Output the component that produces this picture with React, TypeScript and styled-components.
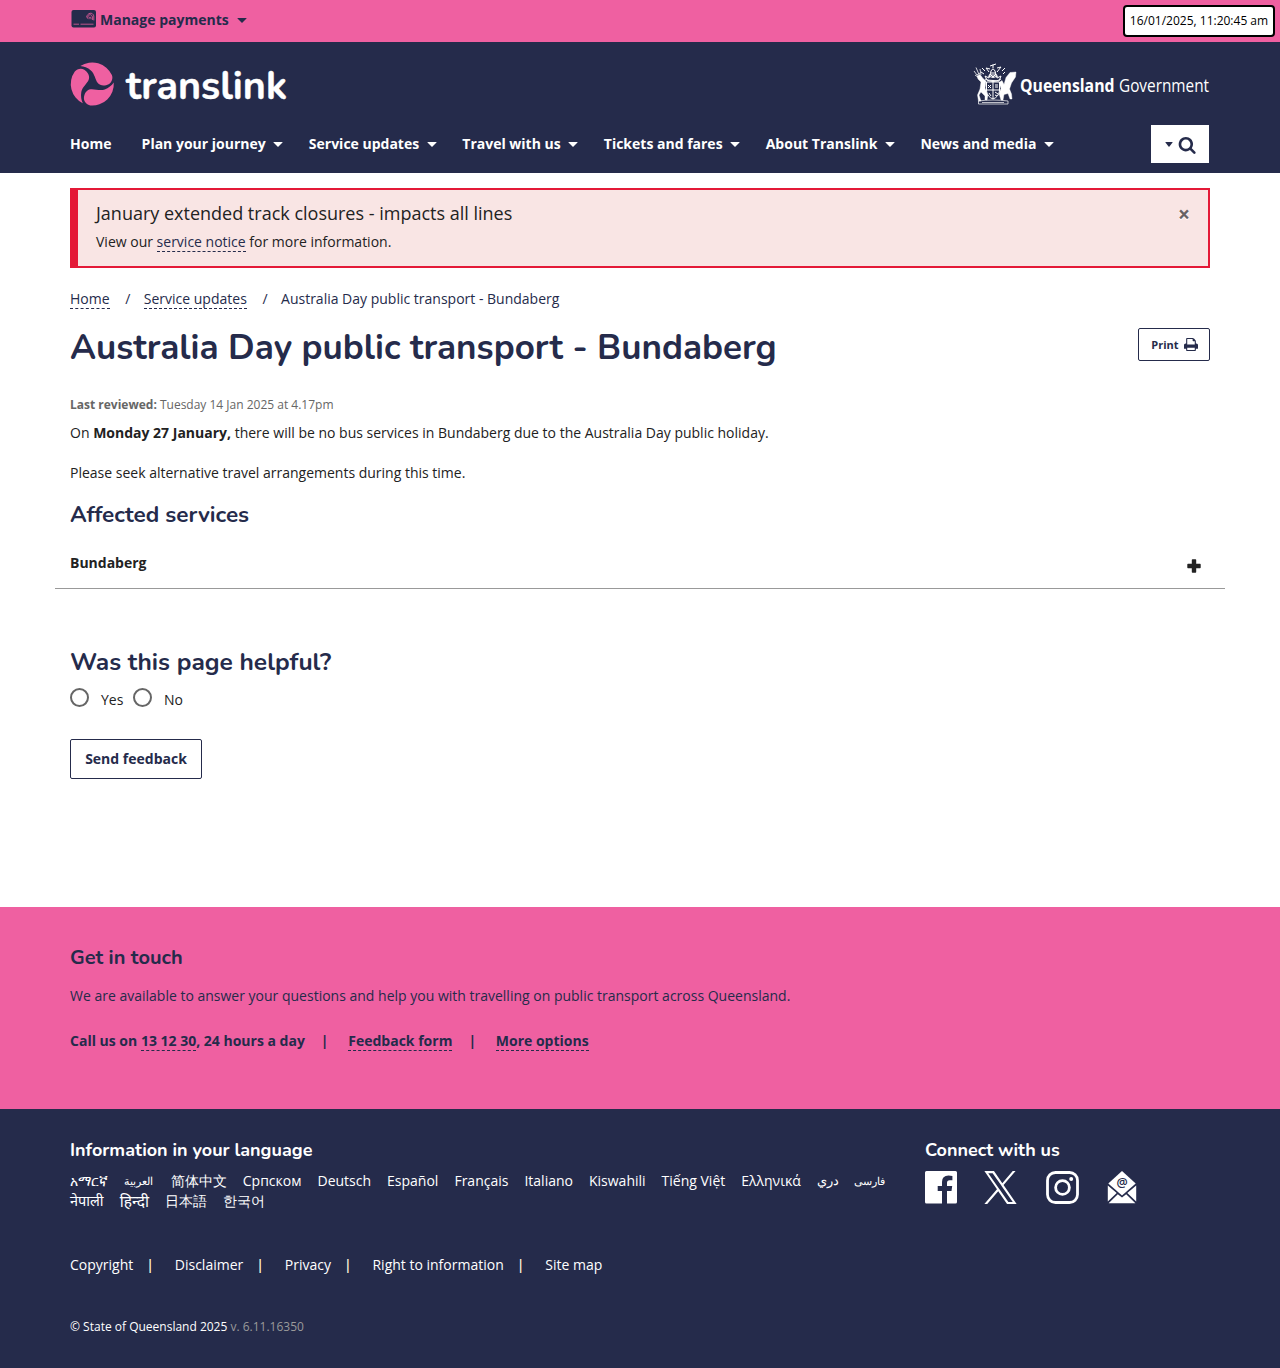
import React from 'react';
import styled, { createGlobalStyle } from 'styled-components';

const navy = '#252b4b';
const pink = '#ef60a1';
const body = '"Open Sans", "Noto Sans", sans-serif';
const heading = 'Nunito, "Open Sans", sans-serif';

const GlobalStyle = createGlobalStyle`
  *, *::before, *::after { box-sizing: border-box; }
  body { margin: 0; background: #fff; color: #222; font: 400 14px/20px ${body}; }
  h1, h2, h3, p, ul { margin: 0; padding: 0; }
  ul { list-style: none; }
  a { color: inherit; text-decoration: none; }
  button { font: inherit; color: inherit; cursor: pointer; }
  svg { display: block; flex: none; overflow: visible; }
`;

const Container = styled.div`
  width: 1140px;
  margin: 0 auto;
`;

const TopBar = styled.div`
  height: 42px;
  background: ${pink};
  color: ${navy};
  display: grid;
  grid-template-columns: 1fr auto;
`;

const PaymentsLink = styled.a`
  display: inline-flex;
  align-items: center;
  height: 40px;
  margin-left: 71px;
  font-weight: 700;
`;

const PaymentsLabel = styled.span`
  margin: 0 8px 0 4px;
`;

const Clock = styled.time`
  height: 32px;
  width: 152px;
  margin: 5px 5px 0 0;
  border: 2px solid #000;
  border-radius: 4px;
  background: #fff;
  color: #000;
  font-size: 12px;
  line-height: 28px;
  text-align: center;
  white-space: nowrap;
`;

const Header = styled.header`
  height: 131px;
  background: ${navy};
  color: #fff;
`;

const BrandRow = styled.div`
  display: flex;
  justify-content: space-between;
  height: 83px;
  padding: 20px 0 0;
`;

const NavRow = styled.nav`
  display: flex;
  justify-content: space-between;
`;

const NavList = styled.ul`
  display: flex;
  gap: 25.5px;
  height: 38px;
`;

const NavItem = styled.li<{ $plain?: boolean }>`
  display: flex;
  align-items: center;
  gap: 7.6px;
  font-weight: 700;
  white-space: nowrap;
  margin-right: ${(p) => (p.$plain ? '4.7px' : '0')};
`;

const Caret = styled.i<{ $small?: boolean }>`
  width: 0;
  height: 0;
  margin-top: 1px;
  border: solid transparent;
  border-width: ${(p) => (p.$small ? '5px 4.5px 0' : '5.5px 5px 0')};
  border-top-color: currentColor;
  border-radius: 1px;
`;

const SearchButton = styled.button`
  display: flex;
  align-items: center;
  gap: 5px;
  width: 58px;
  height: 38px;
  margin-right: 1px;
  padding: 3px 0 0 14px;
  border: 0;
  background: #fff;
  color: ${navy};
`;

const SearchCaret = styled(Caret)`
  margin-top: -3px;
`;

const Alert = styled.section`
  display: flex;
  justify-content: space-between;
  height: 80px;
  margin-top: 15px;
  padding: 10px 18px 0;
  border: 2px solid #e41937;
  border-left-width: 8px;
  background: #f9e5e4;
`;

const AlertTitle = styled.h2`
  font-size: 18px;
  font-weight: 400;
  line-height: 26px;
`;

const AlertText = styled.p`
  margin-top: 6px;
`;

const DashedLink = styled.a`
  color: ${(p) => p.color || 'inherit'};
  border-bottom: 1px dashed currentColor;
`;

const CloseButton = styled.button`
  height: 26px;
  margin-top: 1px;
  padding: 0;
  border: 0;
  background: none;
  color: #686265;
  font-size: 21px;
  font-weight: 700;
  line-height: 26px;
  text-shadow: 0 1px 0 #fff;
`;

const Breadcrumb = styled.nav`
  display: flex;
  margin-top: 21px;
  color: ${navy};
`;

const Slash = styled.span`
  margin: 0 13.4px 0 15.7px;
`;

const TitleRow = styled.div`
  display: flex;
  justify-content: space-between;
  align-items: flex-start;
  height: 86px;
  padding-top: 19px;
`;

const PageTitle = styled.h1`
  color: ${navy};
  font: 700 35px/40px ${heading};
`;

const PrintButton = styled.button`
  display: flex;
  align-items: center;
  justify-content: center;
  gap: 5px;
  width: 72px;
  height: 33px;
  padding: 0 0 0 1px;
  border: 1px solid ${navy};
  border-radius: 2px;
  background: #fff;
  color: ${navy};
  font-size: 11px;
  font-weight: 700;
`;

const Reviewed = styled.p`
  color: #666;
  font-size: 12px;
`;

const Paragraph = styled.p<{ $gap: number }>`
  margin-top: ${(p) => p.$gap}px;
`;

const SectionTitle = styled.h2<{ $size: number; $gap: number }>`
  margin-top: ${(p) => p.$gap}px;
  color: ${navy};
  font: 700 ${(p) => p.$size}px/30px ${heading};
`;

const AccordionRow = styled.div`
  display: flex;
  justify-content: space-between;
  height: 59px;
  margin: 0 -15px;
  padding: 23px 24px 0 15px;
  border-bottom: 1px solid #999;
  font-weight: 700;
`;

const PlusIcon = styled.svg`
  margin-top: 6px;
`;

const RadioRow = styled.div`
  display: flex;
  height: 20px;
  margin-top: 10px;
  gap: 9.5px;
`;

const RadioLabel = styled.label`
  display: flex;
  gap: 12px;
  padding-top: 3px;
`;

const RadioDot = styled.span`
  width: 19px;
  height: 19px;
  margin-top: -2px;
  border: 2px solid #666;
  border-radius: 50%;
`;

const FeedbackButton = styled.button`
  display: block;
  width: 132px;
  height: 40px;
  margin-top: 32px;
  padding: 0;
  border: 1px solid ${navy};
  border-radius: 2px;
  background: #fff;
  color: ${navy};
  font-weight: 700;
`;

const Main = styled.main`
  display: flow-root;
  height: 734px;
`;

const Touch = styled.section`
  height: 202px;
  padding-top: 36px;
  background: ${pink};
  color: ${navy};
`;

const TouchTitle = styled.h2`
  font: 700 20px/30px ${heading};
`;

const TouchLinks = styled.div`
  display: flex;
  margin-top: 25px;
  font-weight: 700;
`;

const TouchBar = styled.span`
  margin: 0 19.7px 0 16px;
`;

const Footer = styled.footer`
  height: 259px;
  padding-top: 26px;
  background: ${navy};
  color: #fff;
`;

const FooterTop = styled.div`
  display: grid;
  grid-template-columns: 855px 1fr;
  height: 120px;
`;

const FooterTitle = styled.h3`
  font: 700 18px/30px ${heading};
`;

const LanguageList = styled.ul`
  display: flex;
  flex-wrap: wrap;
  column-gap: 16px;
  width: 820px;
  margin-top: 6px;
`;

const Language = styled.li<{ $size?: number; $width?: number }>`
  width: ${(p) => (p.$width ? `${p.$width}px` : 'auto')};
  height: 20px;
  font-size: ${(p) => p.$size || 14}px;
  white-space: nowrap;
`;

const SocialList = styled.div`
  display: flex;
  margin-top: 6px;
`;

const SocialLink = styled.a<{ $gap?: number }>`
  margin-right: ${(p) => p.$gap || 0}px;
`;

const LegalList = styled.div`
  display: flex;
`;

const LegalBar = styled.span`
  margin: 0 20.8px 0 13px;
  color: #fff6dc;
  font-weight: 600;
`;

const Copyright = styled.p`
  margin-top: 42px;
  font-size: 12px;
`;

const Version = styled.span`
  color: #9a9a9a;
`;

const CardIcon = () => (
  <svg width="25" height="20" viewBox="0 0 25 20">
    <rect x=".5" width="24.5" height="17.5" rx="2" fill={navy} />
    <path d="M2.500 14.200h5.500M9.500 14.200h13" stroke={pink} strokeWidth="1" opacity=".75" />
    <g fill="none" stroke={pink} strokeWidth=".8">
      <path d="M15.500 7.400c1-5 6.200-5.500 7.300-1.500v4.500" />
      <path d="M16.500 8.500c.5-4.500 4.200-5 4.900-1.500v3" />
      <path d="M18 9.200c.2-3 1.900-3 2 0" />
    </g>
  </svg>
);

const blade =
  'M12 40.8A21.5 21.5 0 0 1 4 9C6 6.300 10.500 5.200 13.500 7.200C17 9.500 19.500 13.500 17.800 17.500C16 21.500 11.500 24.500 10.500 29.500C9.800 33.500 10.500 37.500 12 40.800Z';

const TranslinkLogo = () => (
  <svg width="230" height="55" viewBox="0 0 230 55">
    <g transform="translate(.8 .5)" fill={pink}>
      <path d={blade} />
      <path d={blade} transform="rotate(120 21.5 21.5)" />
      <path d={blade} transform="rotate(240 21.5 21.5)" />
    </g>
    <text x="56" y="36.800" fill="#fff" stroke="#fff" strokeWidth=".4" fontFamily="Nunito" fontWeight="700" fontSize="40.500" textLength="161" lengthAdjust="spacingAndGlyphs">
      translink
    </text>
  </svg>
);

const GovernmentLogo = () => (
  <svg width="237" height="46" viewBox="0 0 237 46">
    <g fill="none" stroke="#fff" strokeWidth="1">
      <path d="M1 9l3 4 3-2M3 5.500l3 7M7 7l1 6M2 13l3 2" strokeWidth=".8" />
      <path fill="#fff" strokeWidth=".4" d="M4 14l3-1.500 3 4 3 2.500-1 7 3 7-1 5h-2l0-4-4-4-2 3 2 6H5.500l-1-6 2.500-6 1-7-3-3z" />
      <path fill="#fff" strokeWidth=".4" d="M43 10l-6 .5-4 5-2 7-2-4-3 2 2 6-2 5 2 6.500h2l1-5.500 4-1 2 5.500h2l-.5-5-2-5 2-6 4-6z" />
      <path d="M13.500 20h13v9q-1 6-6.500 8-5.500-2-6.500-8z" fill={navy} />
      <path d="M20 20v17M13.500 28h13M15 23l3 3m-3 0l3-3M22 23h3m-3 2h3M16 31l2 3m4-4l3 2m-3 1l2 1" />
      <path d="M14 18l-2-4 4 2 1-4 3 3 3-3 1 4 4-2-2 5zM16 10l-3-4 4 1M24 10l4-5-4 1M18 9q2-4 4 0l1 4h-6zM20 6V2.500M17 4l6-2M12 9l-3-3M29 9l3-3M11 12l-3-2M30 12l2-2" />
      <path d="M12 17q8 5 16 0M15 14q5 3 10 0M18 11h5" />
      <path d="M5.500 39q7-1 14.500-1t15 1v3h-29.500zM9 40.500h22" strokeWidth=".7" />
    </g>
    <text x="47" y="29.500" fill="#fff" fontFamily="Open Sans" fontWeight="700" fontSize="18" textLength="94.500" lengthAdjust="spacingAndGlyphs">
      Queensland
    </text>
    <text x="146" y="29.500" fill="#fff" fontFamily="Open Sans" fontWeight="400" fontSize="17.500" textLength="90" lengthAdjust="spacingAndGlyphs">
      Government
    </text>
  </svg>
);

const SearchIcon = () => (
  <svg width="17" height="17" viewBox="0 128 1664 1664" fill="currentColor">
    <path d="M1216 832q0-185-131.5-316.5t-316.5-131.5-316.5 131.5-131.5 316.5 131.5 316.5 316.5 131.5 316.5-131.5 131.5-316.5zM1728 1664q0 52-38 90t-90 38q-54 0-90-38l-343-342q-179 124-399 124-143 0-273.5-55.5t-225-150-150-225-55.5-273.5 55.5-273.5 150-225 225-150 273.5-55.5 273.5 55.5 225 150 150 225 55.5 273.5q0 220-124 399l343 343q37 37 37 90z" />
  </svg>
);

const PrintIcon = () => (
  <svg width="14" height="13" viewBox="0 128 1664 1536" fill="currentColor">
    <path d="M384 1536h896v-256h-896v256zM384 896h896v-384h-160q-40 0-68-28t-28-68v-160h-640v640zM1664 960v416q0 13-9.500 22.500t-22.500 9.500h-224v160q0 40-28 68t-68 28h-960q-40 0-68-28t-28-68v-160h-224q-13 0-22.500-9.500t-9.500-22.500v-416q0-79 56.500-135.500t135.500-56.500h64v-544q0-40 28-68t68-28h672q40 0 88 20t76 48l152 152q28 28 48 76t20 88v256h64q79 0 135.500 56.500t56.500 135.500z" />
  </svg>
);

const FacebookIcon = () => (
  <svg width="32" height="33" viewBox="0 0 32 33">
    <path fill="#fff" d="M1.500 0h29Q32 0 32 1.500v29.500q0 1.500-1.500 1.500H22V20h4.500l.7-5H22v-3.200q0-2.500 2.500-2.500h2.900V4.900Q25.500 4.500 23.500 4.500 17 4.500 17 11v4h-4.300v5H17v12.500H1.500Q0 32.500 0 31v-29.500Q0 0 1.500 0z" />
  </svg>
);

const XIcon = () => (
  <svg width="33" height="33" viewBox="0 0 1200 1227" fill="#fff">
    <path d="M714.163 519.284L1160.890 0H1055.030L667.137 450.887L357.328 0H0L468.492 681.821L0 1226.370H105.866L515.491 750.218L842.672 1226.370H1200L714.137 519.284H714.163ZM569.165 687.828L521.697 619.934L144.011 79.694H306.615L611.412 515.685L658.880 583.579L1055.080 1150.300H892.476L569.165 687.854V687.828Z" />
  </svg>
);

const InstagramIcon = () => (
  <svg width="33" height="33" viewBox="0 0 33 33">
    <rect x="1.500" y="1.500" width="30" height="30" rx="8" fill="none" stroke="#fff" strokeWidth="2.800" />
    <circle cx="16.500" cy="16.500" r="6.900" fill="none" stroke="#fff" strokeWidth="2.800" />
    <circle cx="25.200" cy="7.900" r="2" fill="#fff" />
  </svg>
);

const MailIcon = () => (
  <svg width="30" height="33" viewBox="0 0 30 33">
    <path fill="#fff" d="M15 0l13.700 12.600L15 24.500 1.300 12.600z" />
    <path fill="#fff" d="M.8 14.400l8.900 7.700-8.900 8.500zM29.200 14.400l-8.900 7.700 8.900 8.500zM10.800 23.200l4.200 3.400 4.200-3.400 9.200 9.100H1.600z" />
    <text x="15" y="16" textAnchor="middle" fill={navy} fontFamily="Open Sans" fontWeight="600" fontSize="12.500">@</text>
  </svg>
);

const menu = ['Home', 'Plan your journey', 'Service updates', 'Travel with us', 'Tickets and fares', 'About Translink', 'News and media'];

const languages: [string, number?, number?][] = [
  ['አማርኛ'], ['العربية', 11.2, 30.8], ['简体中文'], ['Српском'], ['Deutsch'], ['Español'], ['Français'], ['Italiano'],
  ['Kiswahili'], ['Tiếng Việt'], ['Ελληνικά'], ['دري', 12.5, 21], ['فارسی', 10.5], ['नेपाली', 14.5], ['हिन्दी', 15.5], ['日本語'], ['한국어'],
];

const legal = ['Copyright', 'Disclaimer', 'Privacy', 'Right to information', 'Site map'];

export default function App() {
  return (
    <>
      <GlobalStyle />
      <TopBar>
        <PaymentsLink href="#">
          <CardIcon />
          <PaymentsLabel>Manage payments</PaymentsLabel>
          <Caret />
        </PaymentsLink>
        <Clock>16/01/2025, 11:20:45 am</Clock>
      </TopBar>
      <Header>
        <Container>
          <BrandRow>
            <TranslinkLogo />
            <GovernmentLogo />
          </BrandRow>
          <NavRow>
            <NavList>
              {menu.map((label, i) => (
                <NavItem key={label} $plain={i === 0}>
                  {label}
                  {i > 0 && <Caret />}
                </NavItem>
              ))}
            </NavList>
            <SearchButton aria-label="Search">
              <SearchCaret $small />
              <SearchIcon />
            </SearchButton>
          </NavRow>
        </Container>
      </Header>
      <Main>
        <Container>
          <Alert>
            <div>
              <AlertTitle>January extended track closures - impacts all lines</AlertTitle>
              <AlertText>
                View our <DashedLink href="#" color={navy}>service notice</DashedLink> for more information.
              </AlertText>
            </div>
            <CloseButton aria-label="Close">×</CloseButton>
          </Alert>
          <Breadcrumb>
            <span><DashedLink href="#">Home</DashedLink></span>
            <Slash>/</Slash>
            <span><DashedLink href="#">Service updates</DashedLink></span>
            <Slash>/</Slash>
            <span>Australia Day public transport - Bundaberg</span>
          </Breadcrumb>
          <TitleRow>
            <PageTitle>Australia Day public transport - Bundaberg</PageTitle>
            <PrintButton>
              Print <PrintIcon />
            </PrintButton>
          </TitleRow>
          <Reviewed>
            <b>Last reviewed:</b> Tuesday 14 Jan 2025 at 4.17pm
          </Reviewed>
          <Paragraph $gap={8}>
            On <b>Monday 27 January,</b> there will be no bus services in Bundaberg due to the Australia Day public holiday.
          </Paragraph>
          <Paragraph $gap={20}>Please seek alternative travel arrangements during this time.</Paragraph>
          <SectionTitle $size={22.5} $gap={17}>Affected services</SectionTitle>
          <AccordionRow>
            Bundaberg
            <PlusIcon width="14" height="14" viewBox="0 0 14 14">
              <path fill="#222" d="M5.500 .3h3q.7 0 .7.700v3.800H13q.7 0 .7.700v3q0 .7-.7.700H9.200V13q0 .7-.7.700h-3q-.7 0-.7-.7V9.200H1q-.7 0-.7-.7v-3q0-.7.7-.7h3.800V1q0-.7.700-.7z" />
            </PlusIcon>
          </AccordionRow>
          <SectionTitle $size={24.5} $gap={58}>Was this page helpful?</SectionTitle>
          <RadioRow>
            <RadioLabel><RadioDot />Yes</RadioLabel>
            <RadioLabel><RadioDot />No</RadioLabel>
          </RadioRow>
          <FeedbackButton>Send feedback</FeedbackButton>
        </Container>
      </Main>
      <Touch>
        <Container>
          <TouchTitle>Get in touch</TouchTitle>
          <Paragraph $gap={13}>
            We are available to answer your questions and help you with travelling on public transport across Queensland.
          </Paragraph>
          <TouchLinks>
            <span>Call us on <DashedLink href="#">13 12 30</DashedLink>, 24 hours a day</span>
            <TouchBar>|</TouchBar>
            <span><DashedLink href="#">Feedback form</DashedLink></span>
            <TouchBar>|</TouchBar>
            <span><DashedLink href="#">More options</DashedLink></span>
          </TouchLinks>
        </Container>
      </Touch>
      <Footer>
        <Container>
          <FooterTop>
            <div>
              <FooterTitle>Information in your language</FooterTitle>
              <LanguageList>
                {languages.map(([name, size, width]) => (
                  <Language key={name} $size={size} $width={width}>{name}</Language>
                ))}
              </LanguageList>
            </div>
            <div>
              <FooterTitle>Connect with us</FooterTitle>
              <SocialList>
                <SocialLink href="#" aria-label="Facebook" $gap={27}><FacebookIcon /></SocialLink>
                <SocialLink href="#" aria-label="X" $gap={29}><XIcon /></SocialLink>
                <SocialLink href="#" aria-label="Instagram" $gap={28}><InstagramIcon /></SocialLink>
                <SocialLink href="#" aria-label="Email"><MailIcon /></SocialLink>
              </SocialList>
            </div>
          </FooterTop>
          <LegalList>
            {legal.map((label, i) => (
              <React.Fragment key={label}>
                {i > 0 && <LegalBar>|</LegalBar>}
                <a href="#">{label}</a>
              </React.Fragment>
            ))}
          </LegalList>
          <Copyright>
            © State of Queensland 2025 <Version>v. 6.11.16350</Version>
          </Copyright>
        </Container>
      </Footer>
    </>
  );
}
